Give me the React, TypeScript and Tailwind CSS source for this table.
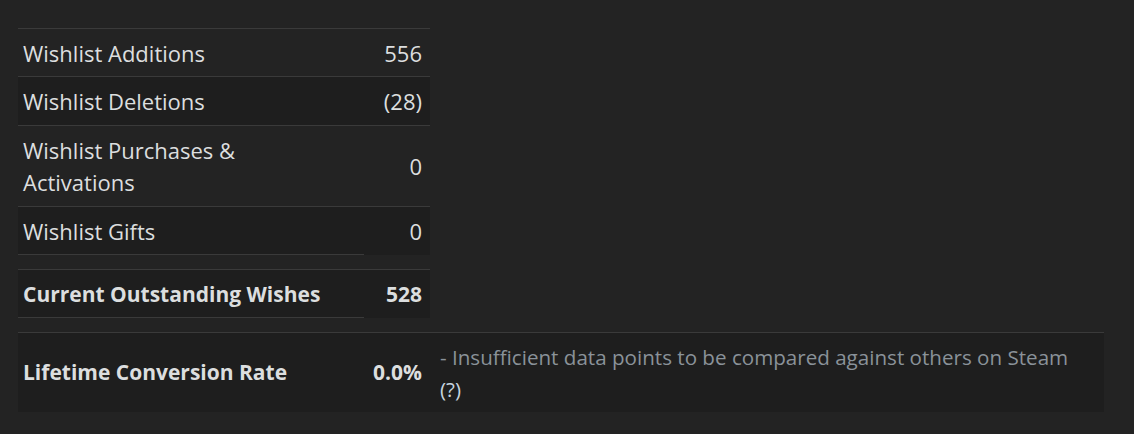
const rows = [
	{ label: "Wishlist Additions", value: "556", dark: false, h: "h-[48px]" },
	{ label: "Wishlist Deletions", value: "(28)", dark: true, h: "h-[49px]" },
	{ label: "Wishlist Purchases & Activations", value: "0", dark: false, h: "h-[81px]" },
];

export default function App() {
	return (
		<div
			className="w-[1134px] h-[434px] bg-[#232323] text-[#dcdedf] pt-[28px] pl-[18px]"
			style={{ fontFamily: '"Open Sans", "Liberation Sans", sans-serif' }}
		>
			<div className="w-[412px] border-t border-[#3a3a3a]">
				{rows.map((row) => (
					<div
						key={row.label}
						className={`flex items-center border-b border-[#3a3a3a] text-[22px] leading-[32px] ${row.h} ${
							row.dark ? "bg-[#1e1e1e]" : ""
						}`}
					>
						<div className="w-[346px] pl-[5px] pr-[40px]">{row.label}</div>
						<div className="flex-1 text-right pr-[8px]">{row.value}</div>
					</div>
				))}
				<div className="flex bg-[#1e1e1e] text-[22px] leading-[32px]">
					<div className="w-[346px] h-[48px] pl-[5px] flex items-center border-b border-[#3a3a3a]">
						Wishlist Gifts
					</div>
					<div className="flex-1 flex items-center justify-end pr-[8px]">0</div>
				</div>
			</div>

			<div className="w-[412px] mt-[14px] border-t border-[#3a3a3a]">
				<div className="flex bg-[#1e1e1e] text-[21px] leading-[32px] font-bold">
					<div className="w-[346px] h-[48px] pl-[5px] flex items-center border-b border-[#3a3a3a]">
						Current Outstanding Wishes
					</div>
					<div className="flex-1 flex items-center justify-end pr-[8px]">528</div>
				</div>
			</div>

			<div className="w-[1086px] mt-[14px] border-t border-[#3a3a3a] bg-[#1e1e1e] flex h-[80px]">
				<div className="w-[346px] pl-[5px] flex items-center text-[21px] font-bold">
					Lifetime Conversion Rate
				</div>
				<div className="w-[66px] flex items-center justify-end pr-[8px] text-[21px] font-bold">
					0.0%
				</div>
				<div className="flex-1 pl-[10px] pr-[20px] pt-[8px] text-[20.6px] leading-[32px] text-[#8a9299]">
					- Insufficient data points to be compared against others on Steam{" "}
					<span className="text-[#c6d4df]">(?)</span>
				</div>
			</div>
		</div>
	);
}
